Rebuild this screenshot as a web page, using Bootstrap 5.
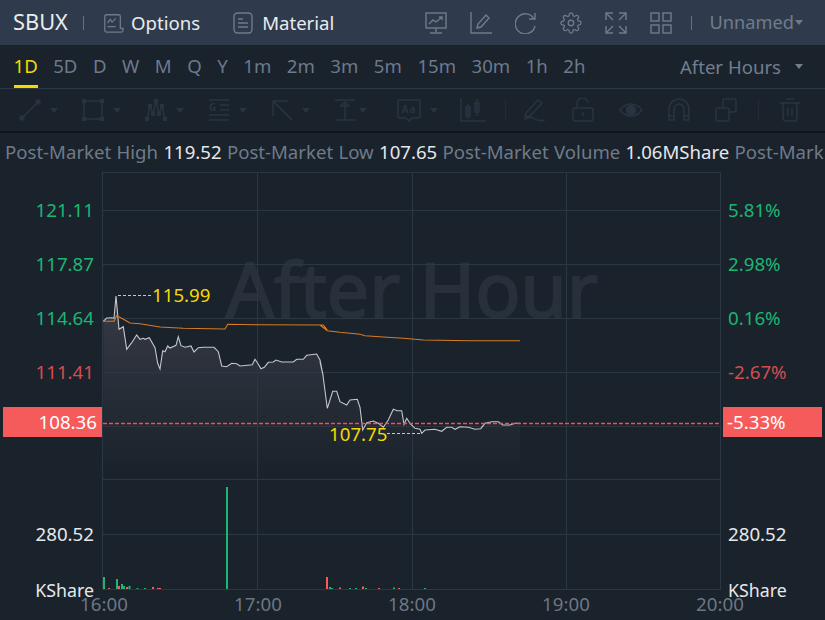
<!DOCTYPE html>
<html lang="en">
<head>
    <meta charset="UTF-8">
    <meta name="viewport" content="width=device-width, initial-scale=1.0">
    <title>SBUX After Hours</title>
    <link href="https://cdn.jsdelivr.net/npm/bootstrap@5.3.0/dist/css/bootstrap.min.css" rel="stylesheet">
    <style>
        html, body { height: 100%; }
        body {
            background: #1a222c;
            font-family: "Noto Sans", "Liberation Sans", sans-serif;
            font-size: 18.6px;
            overflow: hidden;
        }
        .top-bar { height: 45px; background: #2f3b4c; padding: 0 22px 0 13px; color: #e9ecef; }
        .top-bar svg { display: block; fill: none; stroke: #6f7b8b; stroke-width: 1.4; }
        .symbol { font-size: 21.8px; width: 70px; }
        .bar-sep { width: 1px; height: 14px; background: #66717f; }
        .opt-icon { margin: 0 7px 0 18px; }
        .mat-icon { margin: 0 8px 0 32px; }
        .top-tools { gap: 23px; }
        .tools-sep { margin-left: -4px; }
        .unnamed { color: #6f7b8b; margin-left: 18px; font-size: 18.2px; }
        .mini-caret { width: 0; height: 0; border-left: 4.5px solid transparent; border-right: 4.5px solid transparent; border-top: 5px solid currentColor; }
        .unnamed .mini-caret { margin-left: 1px; }

        .tf-bar { height: 44px; border-bottom: 1px solid #2d3947; padding: 0 22px 0 13.5px; color: #6c7a8c; }
        .tf-list { gap: 15.5px; }
        .tf-item { height: 43px; line-height: 42px; border-bottom: 3px solid transparent; }
        .tf-on { color: #f3d900; border-bottom-color: #f3d900; }
        .session { gap: 14px; color: #717e8e; }

        .draw-bar { height: 44px; border-bottom: 2px solid #10151c; padding-left: 19px; color: #2a3340; }
        .draw-bar svg { display: block; fill: none; stroke: #2a3340; stroke-width: 1.5; flex: none; }
        .draw-bar svg circle { fill: #2a3340; }
        .draw-bar svg text { fill: #2a3340; stroke: none; font-weight: 700; }
        .draw-group { width: 63px; flex: none; }
        .draw-group .mini-caret { margin-left: 9px; }
        .draw-group .caret-near { margin-left: 3px; }
        .draw-one { margin-right: 25px; }
        .draw-sep { width: 1px; height: 22px; background: #222b37; flex: none; }
        .sep-a { margin: 0 17px 0 -6px; }
        .sep-b { margin: 0 21px; }

        .stats-row { height: 39px; line-height: 38px; padding-left: 5px; white-space: nowrap; color: #6f7b88; overflow: hidden; word-spacing: .5px; }
        .stats-row b { font-weight: 400; color: #e6e8ea; }

        .chart-svg { display: block; }
        .chart-svg text { font-family: "Noto Sans", "Liberation Sans", sans-serif; font-size: 18.7px; }
        .chart-svg .watermark { font-size: 75px; stroke: #28303b; stroke-width: 2; }
        .chart-svg .unit-label { font-size: 17.8px; }
    </style>
</head>
<body>
    <!-- Title bar -->
    <div class="top-bar d-flex align-items-center">
        <div class="symbol">SBUX</div>
        <div class="bar-sep"></div>
        <svg class="opt-icon" width="22" height="22" viewBox="0 0 24 24"><path d="M20 18V5a2 2 0 0 0-2-2H5a2 2 0 0 0-2 2v15a2 2 0 0 0 2 2h16a2 2 0 0 0 2-2v-2h-3"/><path d="M6 12l3-4 2 3 4-4M6 16h9"/></svg>
        <span>Options</span>
        <svg class="mat-icon" width="22" height="24" viewBox="0 0 22 24"><rect x="2" y="2" width="18" height="20" rx="3.5"/><path d="M6 8h5M6 12h10M6 16h10"/></svg>
        <span>Material</span>

        <div class="top-tools d-flex align-items-center ms-auto">
            <svg width="22" height="22" viewBox="0 0 22 22"><rect x="1" y="1" width="20" height="15"/><path d="M4 12l4-4 3 2 6-5M14 5h3v3M11 16v4M5 21h12"/></svg>
            <svg width="22" height="22" viewBox="0 0 22 22"><path d="M1 0v21h21M7 16l1-4 8-9 3 3-8 9z"/></svg>
            <svg width="22" height="22" viewBox="0 0 22 22"><path d="M19 7a10 10 0 1 0 1 7M20 1v6h-6"/></svg>
            <svg width="22" height="22" viewBox="0 0 24 24"><circle cx="12" cy="12" r="3"/><path d="M19.4 15a1.65 1.65 0 0 0 .33 1.82l.06.06a2 2 0 0 1 0 2.83 2 2 0 0 1-2.83 0l-.06-.06a1.65 1.65 0 0 0-1.82-.33 1.65 1.65 0 0 0-1 1.51V21a2 2 0 0 1-2 2 2 2 0 0 1-2-2v-.09A1.65 1.65 0 0 0 9 19.4a1.65 1.65 0 0 0-1.82.33l-.06.06a2 2 0 0 1-2.83 0 2 2 0 0 1 0-2.83l.06-.06a1.65 1.65 0 0 0 .33-1.82 1.65 1.65 0 0 0-1.51-1H3a2 2 0 0 1-2-2 2 2 0 0 1 2-2h.09A1.65 1.65 0 0 0 4.6 9a1.65 1.65 0 0 0-.33-1.82l-.06-.06a2 2 0 0 1 0-2.83 2 2 0 0 1 2.83 0l.06.06a1.65 1.65 0 0 0 1.82.33H9a1.65 1.65 0 0 0 1-1.51V3a2 2 0 0 1 2-2 2 2 0 0 1 2 2v.09a1.65 1.65 0 0 0 1 1.51 1.65 1.65 0 0 0 1.82-.33l.06-.06a2 2 0 0 1 2.83 0 2 2 0 0 1 0 2.83l-.06.06a1.65 1.65 0 0 0-.33 1.82V9a1.65 1.65 0 0 0 1.51 1H21a2 2 0 0 1 2 2 2 2 0 0 1-2 2h-.09a1.65 1.65 0 0 0-1.51 1z"/></svg>
            <svg width="22" height="22" viewBox="0 0 22 22"><path d="M1 8V1h7M2 2l6 6M14 1h7v7M20 2l-6 6M1 14v7h7M2 20l6-6M21 14v7h-7M20 20l-6-6"/></svg>
            <svg width="22" height="22" viewBox="0 0 22 22"><rect x="1" y="1" width="8" height="8"/><rect x="13" y="1" width="8" height="8"/><rect x="1" y="13" width="8" height="8"/><rect x="13" y="13" width="8" height="8"/></svg>
            <div class="bar-sep tools-sep"></div>
        </div>
        <div class="unnamed d-flex align-items-center">Unnamed<span class="mini-caret"></span></div>
    </div>

    <!-- Time frames -->
    <div class="tf-bar d-flex align-items-center justify-content-between">
        <div class="tf-list d-flex">
            <div class="tf-item tf-on">1D</div>
            <div class="tf-item">5D</div>
            <div class="tf-item">D</div>
            <div class="tf-item">W</div>
            <div class="tf-item">M</div>
            <div class="tf-item">Q</div>
            <div class="tf-item">Y</div>
            <div class="tf-item">1m</div>
            <div class="tf-item">2m</div>
            <div class="tf-item">3m</div>
            <div class="tf-item">5m</div>
            <div class="tf-item">15m</div>
            <div class="tf-item">30m</div>
            <div class="tf-item">1h</div>
            <div class="tf-item">2h</div>
        </div>
        <div class="session d-flex align-items-center"><span>After Hours</span><span class="mini-caret"></span></div>
    </div>

    <!-- Drawing tools, disabled look -->
    <div class="draw-bar d-flex align-items-center">
        <div class="draw-group d-flex align-items-center">
            <svg width="22" height="22" viewBox="0 0 22 22"><path d="M3 19L19 3"/><circle cx="3" cy="19" r="2"/><circle cx="19" cy="3" r="2"/></svg>
            <span class="mini-caret"></span>
        </div>
        <div class="draw-group d-flex align-items-center">
            <svg width="22" height="22" viewBox="0 0 22 22"><rect x="2" y="2" width="18" height="18"/><circle cx="2" cy="2" r="1.8"/><circle cx="20" cy="2" r="1.8"/><circle cx="2" cy="20" r="1.8"/><circle cx="20" cy="20" r="1.8"/></svg>
            <span class="mini-caret"></span>
        </div>
        <div class="draw-group d-flex align-items-center">
            <svg width="22" height="22" viewBox="0 0 22 22"><path d="M2 20L5 7l3 8 3-13 3 13 3-8 3 13"/><circle cx="2" cy="20" r="1.6"/><circle cx="5" cy="7" r="1.6"/><circle cx="8" cy="15" r="1.6"/><circle cx="11" cy="2" r="1.6"/><circle cx="14" cy="15" r="1.6"/><circle cx="17" cy="7" r="1.6"/><circle cx="20" cy="20" r="1.6"/></svg>
            <span class="mini-caret"></span>
        </div>
        <div class="draw-group d-flex align-items-center">
            <svg width="22" height="22" viewBox="0 0 22 22"><path d="M1 1h20M12 6h9M12 11h9M1 16h20M1 21h20"/><text x="1" y="12" font-size="10">G</text></svg>
            <span class="mini-caret"></span>
        </div>
        <div class="draw-group d-flex align-items-center">
            <svg width="22" height="22" viewBox="0 0 22 22"><path d="M2 2h15M2 2v15M2 2l19 19"/></svg>
            <span class="mini-caret"></span>
        </div>
        <div class="draw-group d-flex align-items-center">
            <svg width="22" height="22" viewBox="0 0 22 22"><path d="M1 1h20M1 21h20M11 5v16"/><path d="M7 7l4-4 4 4z"/></svg>
            <span class="mini-caret caret-near"></span>
        </div>
        <div class="draw-group d-flex align-items-center">
            <svg width="24" height="24" viewBox="0 0 24 24"><path d="M2 2h20a1 1 0 0 1 1 1v16a1 1 0 0 1-1 1h-7l-3 3-3-3H2a1 1 0 0 1-1-1V3a1 1 0 0 1 1-1z"/><text x="12" y="15" text-anchor="middle" font-size="10" letter-spacing="1">Aa</text></svg>
            <span class="mini-caret"></span>
        </div>
        <svg class="draw-one" width="26" height="24" viewBox="0 0 26 24"><path d="M1 0v23h25"/><rect x="6" y="9" width="4" height="9"/><path d="M8 6v15M17 1v17"/><rect x="15" y="5" width="4" height="9"/></svg>
        <div class="draw-sep sep-a"></div>
        <svg class="draw-one" width="24" height="24" viewBox="0 0 24 24"><path d="M3 15L15 2l4 3L7 18l-5 1zM1 22c4-3 8-3 11-1s6 2 10 1"/></svg>
        <svg class="draw-one" width="22" height="24" viewBox="0 0 22 24"><rect x="1" y="10" width="20" height="13" rx="2.5"/><path d="M5 10V6a5.5 5.5 0 0 1 11-1M11 14v4"/></svg>
        <svg class="draw-one" width="24" height="24" viewBox="0 0 24 24"><path d="M1 12c6-8 16-8 22 0-6 8-16 8-22 0z"/><circle cx="12" cy="12" r="4.5"/></svg>
        <svg class="draw-one" width="22" height="24" viewBox="0 0 22 24"><path d="M1 22V11a10 10 0 0 1 20 0v11h-5V11a5 5 0 0 0-10 0v11zM1 18h5M16 18h5"/></svg>
        <svg width="22" height="24" viewBox="0 0 22 24"><path d="M8 10V3a2 2 0 0 1 2-2h9a2 2 0 0 1 2 2v9a2 2 0 0 1-2 2h-5"/><rect x="1" y="10" width="13" height="13" rx="2"/></svg>
        <div class="draw-sep sep-b"></div>
        <svg width="20" height="24" viewBox="0 0 20 24"><path d="M0 5h20M6 1h8M3 5v15a3 3 0 0 0 3 3h8a3 3 0 0 0 3-3V5M8 10v8M12 10v8"/></svg>
    </div>

    <!-- Session stats, the window cuts the last label in the original -->
    <div class="stats-row">Post-Market High <b>119.52</b> Post-Market Low <b>107.65</b> Post-Market Volume <b>1.06MShare</b> Post-Mark</div>

    <svg id="chart" class="chart-svg" width="825" height="448" viewBox="0 172 825 448"></svg>

    <script src="https://cdn.jsdelivr.net/npm/bootstrap@5.3.0/dist/js/bootstrap.bundle.min.js"></script>
    <script>
        const GREEN = "#1cb574", RED = "#f55b5b", YELLOW = "#f3d900", GRID = "#2c3744";

        // price line, read off the zoomed crops: [x, y] in page pixels
        const crop1 = [[40,124],[50,114],[65,113],[72,115],[78,48],[87,148],[100,140],[110,208],[125,188],[140,165],[150,178],[160,175],[165,178],[178,173],[195,203],[203,250],[210,267],[218,212],[225,215],[233,198],[240,204],[258,196],[265,170],[273,197],[285,202],[303,198],[312,216],[325,203],[340,202],[372,202],[385,215],[395,258],[410,260],[425,250],[440,251],[450,258],[487,254],[495,238],[503,250],[513,266],[523,262],[535,247],[550,246],[558,240],[575,246],[610,246],[620,238],[640,238],[650,226],[680,222],[690,240],[700,290]];
        const crop2 = [[0,125],[8,160],[22,265],[38,214],[50,214],[60,245],[80,255],[90,240],[112,238],[120,262],[128,330],[140,308],[160,303],[175,310],[190,322],[205,300],[220,268],[232,272],[245,272],[252,313],[260,295],[270,310],[285,325],[300,328],[305,340],[315,330],[345,328],[365,334],[380,322],[395,322],[405,328],[420,320],[445,322],[465,328],[482,326],[495,310],[515,305],[535,305],[548,315],[570,315],[585,310],[600,310]];
        const avg1 = [[40,124],[72,124],[80,107],[95,115],[120,129],[150,131],[210,141],[280,145],[405,147],[413,133],[500,134],[700,135],[712,150]];
        const avg2 = [[0,15],[22,32],[60,37],[120,43],[135,47],[190,51],[250,55],[310,60],[450,62],[600,62]];

        const toPage = (pts, ox, oy) => pts.map(p => [ox + p[0] / 3, oy + p[1] / 3]);
        const price = toPage(crop1, 90, 280).concat(toPage(crop2, 320, 320));
        const avg = toPage(avg1, 90, 280).concat(toPage(avg2, 320, 320));
        const d = pts => "M" + pts.map(p => p[0].toFixed(1) + " " + p[1].toFixed(1)).join("L");

        // x, top, colour
        const volumes = [[103,577,GREEN],[108,588,RED],[116,579,GREEN],[118,586,RED],[121,584,GREEN],[123,586,GREEN],[126,587,RED],[128.5,586,GREEN],[136.5,588,GREEN],[144,588,GREEN],[152,587,RED],[157,588,RED],[159,588,RED],[226,487,GREEN],[326,577,RED],[329,587,GREEN],[331,588,GREEN],[339,587.5,RED],[349,588,GREEN],[355,588,GREEN],[362,586.5,RED],[365,588,GREEN],[378,588,RED],[393,587.5,GREEN],[398,588,RED],[424,588,GREEN]];

        const leftAxis = [["121.11",217,GREEN],["117.87",271,GREEN],["114.64",325,GREEN],["111.41",379,"#d34d4f"],["280.52",541,"#e6e8ea"]];
        const rightAxis = [["5.81%",217,GREEN],["2.98%",271,GREEN],["0.16%",325,GREEN],["-2.67%",379,"#d34d4f"],["280.52",541,"#e6e8ea"]];
        const times = [["16:00",104],["17:00",258],["18:00",412],["19:00",566],["20:00",720]];

        let h = `<defs><linearGradient id="areaFill" gradientUnits="userSpaceOnUse" x1="0" y1="300" x2="0" y2="465">
            <stop offset="0" stop-color="#363a44"/><stop offset="1" stop-color="#1b232d"/></linearGradient></defs>`;

        // watermark
        h += `<text class="watermark" x="412" y="317" text-anchor="middle" fill="#28303b">After Hour</text>`;

        // grid
        [172,210,264,318,372,426,479,534,589].forEach(y => { h += `<path d="M102 ${y+.5}H721" stroke="${GRID}"/>`; });
        [102,257,412,566,720].forEach(x => { h += `<path d="M${x+.5} 172V590" stroke="${GRID}"/>`; });

        // area, lines
        const last = price[price.length - 1];
        h += `<path d="${d(price)}L${last[0]} 465L${price[0][0]} 465Z" fill="url(#areaFill)"/>`;
        h += `<path d="M102 318.5H721M102 372.5H721M102 426.5H721M257.5 172V590M412.5 172V590" stroke="${GRID}" fill="none"/>`;
        h += `<path d="${d(price)}" fill="none" stroke="#c4c7cc" stroke-width="1.1"/>`;
        h += `<path d="${d(avg)}" fill="none" stroke="#d67c22" stroke-width="1.1"/>`;

        // volume
        volumes.forEach(v => { h += `<rect x="${v[0]}" y="${v[1]}" width="2" height="${589 - v[1]}" fill="${v[2]}"/>`; });

        // last price line and tags
        h += `<path d="M103 423.5H721" fill="none" stroke="#ff4a4f" stroke-width="1.5" stroke-dasharray="4 2"/>`;
        h += `<rect x="3" y="407" width="99" height="30" fill="${RED}"/><rect x="723" y="407" width="99" height="30" fill="${RED}"/>`;
        h += `<text x="97" y="429" text-anchor="end" fill="#fff">108.36</text><text x="727" y="429" fill="#fff">-5.33%</text>`;

        // axis labels
        leftAxis.forEach(a => { h += `<text x="94" y="${a[1]}" text-anchor="end" fill="${a[2]}">${a[0]}</text>`; });
        rightAxis.forEach(a => { h += `<text x="728" y="${a[1]}" fill="${a[2]}">${a[0]}</text>`; });
        h += `<text class="unit-label" x="94" y="597" text-anchor="end" fill="#e6e8ea">KShare</text><text class="unit-label" x="728" y="597" fill="#e6e8ea">KShare</text>`;
        times.forEach(t => { h += `<text x="${t[1]}" y="611" text-anchor="middle" fill="#6c7683">${t[0]}</text>`; });

        // high / low marks
        h += `<path d="M118 295.5H152M387 433.5H421" fill="none" stroke="${YELLOW}" stroke-width="1.2" stroke-dasharray="3 2"/>`;
        h += `<text x="152" y="302" fill="${YELLOW}">115.99</text><text x="329" y="441" fill="${YELLOW}">107.75</text>`;

        document.getElementById("chart").innerHTML = h;
    </script>
</body>
</html>
